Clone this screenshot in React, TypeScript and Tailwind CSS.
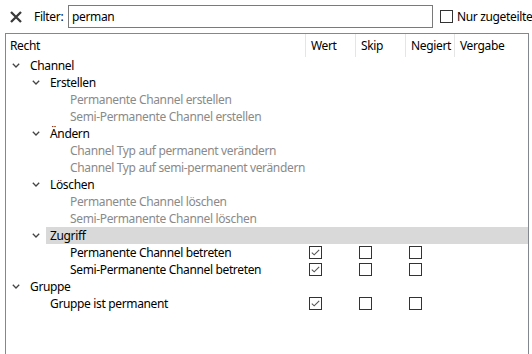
import React from "react";

type Row = {
  label: string;
  level: 0 | 1 | 2;
  parent?: boolean;
  muted?: boolean;
  selected?: boolean;
  checks?: [boolean, boolean, boolean];
};

const rows: Row[] = [
  { label: "Channel", level: 0, parent: true },
  { label: "Erstellen", level: 1, parent: true },
  { label: "Permanente Channel erstellen", level: 2, muted: true },
  { label: "Semi-Permanente Channel erstellen", level: 2, muted: true },
  { label: "Ändern", level: 1, parent: true },
  { label: "Channel Typ auf permanent verändern", level: 2, muted: true },
  { label: "Channel Typ auf semi-permanent verändern", level: 2, muted: true },
  { label: "Löschen", level: 1, parent: true },
  { label: "Permanente Channel löschen", level: 2, muted: true },
  { label: "Semi-Permanente Channel löschen", level: 2, muted: true },
  { label: "Zugriff", level: 1, parent: true, selected: true },
  { label: "Permanente Channel betreten", level: 2, checks: [true, false, false] },
  { label: "Semi-Permanente Channel betreten", level: 2, checks: [true, false, false] },
  { label: "Gruppe", level: 0, parent: true },
  { label: "Gruppe ist permanent", level: 1, checks: [true, false, false] },
];

// indent spacer and remaining width of the "Recht" column per level
const indent = { 0: "w-[20px]", 1: "w-[40px]", 2: "w-[60px]" };
const labelWidth = { 0: "w-[279px]", 1: "w-[259px]", 2: "w-[239px]" };

function Chevron() {
  return (
    <svg width="8" height="5" viewBox="0 0 8 5" className="ml-[6px]">
      <path d="M0.8 0.8 L4 4 L7.2 0.8" fill="none" stroke="#444" strokeWidth="1.3" />
    </svg>
  );
}

function Box({ checked }: { checked: boolean }) {
  return (
    <span className="flex h-[13px] w-[13px] items-center justify-center border border-[#333] bg-white">
      {checked && (
        <svg width="9" height="7" viewBox="0 0 9 7">
          <path d="M0.8 3.6 L3.2 5.8 L8.2 0.8" fill="none" stroke="#555" strokeWidth="1.1" />
        </svg>
      )}
    </span>
  );
}

function TreeRow({ row }: { row: Row }) {
  return (
    <div className="flex h-[17px] items-center">
      <div className={`${indent[row.level]} flex h-full shrink-0 items-center justify-end`}>
        {row.parent && (
          <span className="flex w-[20px] items-center">
            <Chevron />
          </span>
        )}
      </div>
      <div className={`flex h-full flex-1 items-center ${row.selected ? "bg-[#d9d9d9]" : ""}`}>
        <span
          className={`${labelWidth[row.level]} shrink-0 pl-[4px] whitespace-nowrap ${
            row.muted ? "text-[#8a8a8a]" : "text-black"
          }`}
        >
          {row.label}
        </span>
        {row.checks &&
          row.checks.map((c, i) => (
            <span key={i} className={`${i === 2 ? "w-[49px]" : "w-[50px]"} flex shrink-0 pl-[4px]`}>
              <Box checked={c} />
            </span>
          ))}
      </div>
    </div>
  );
}

export default function App() {
  return (
    <div
      className="h-[354px] w-[532px] overflow-hidden bg-white text-[12px] leading-none tracking-[-0.35px] text-black"
      style={{ fontFamily: '"Noto Sans", "Open Sans", sans-serif' }}
    >
      <div className="flex h-[33px] items-center">
        <svg width="12" height="12" viewBox="0 0 12 12" className="ml-[10px] shrink-0">
          <path d="M1 1 L11 11 M11 1 L1 11" stroke="#3a3a3a" strokeWidth="2.3" />
        </svg>
        <span className="ml-[12px] w-[34px] shrink-0 whitespace-nowrap">Filter:</span>
        <div className="flex h-[23px] w-[365px] shrink-0 items-center border border-[#7a7a7a] pl-[3px]">
          perman
        </div>
        <span className="ml-[7px] h-[13px] w-[13px] shrink-0 border border-[#333]" />
        <span className="ml-[4px] whitespace-nowrap">Nur zugeteilte</span>
      </div>

      <div className="ml-[5px] h-[340px] w-[524px] border border-[#828790]">
        <div className="flex h-[23px] items-center">
          <span className="w-[299px] pl-[4px]">Recht</span>
          <span className="flex h-full w-[50px] items-center border-l border-[#e5e5e5] pl-[5px]">Wert</span>
          <span className="flex h-full w-[50px] items-center border-l border-[#e5e5e5] pl-[5px]">Skip</span>
          <span className="flex h-full w-[49px] items-center border-l border-[#e5e5e5] pl-[5px]">Negiert</span>
          <span className="flex h-full flex-1 items-center border-l border-[#e5e5e5] pl-[5px]">Vergabe</span>
        </div>
        {rows.map((r, i) => (
          <TreeRow key={i} row={r} />
        ))}
      </div>
    </div>
  );
}
